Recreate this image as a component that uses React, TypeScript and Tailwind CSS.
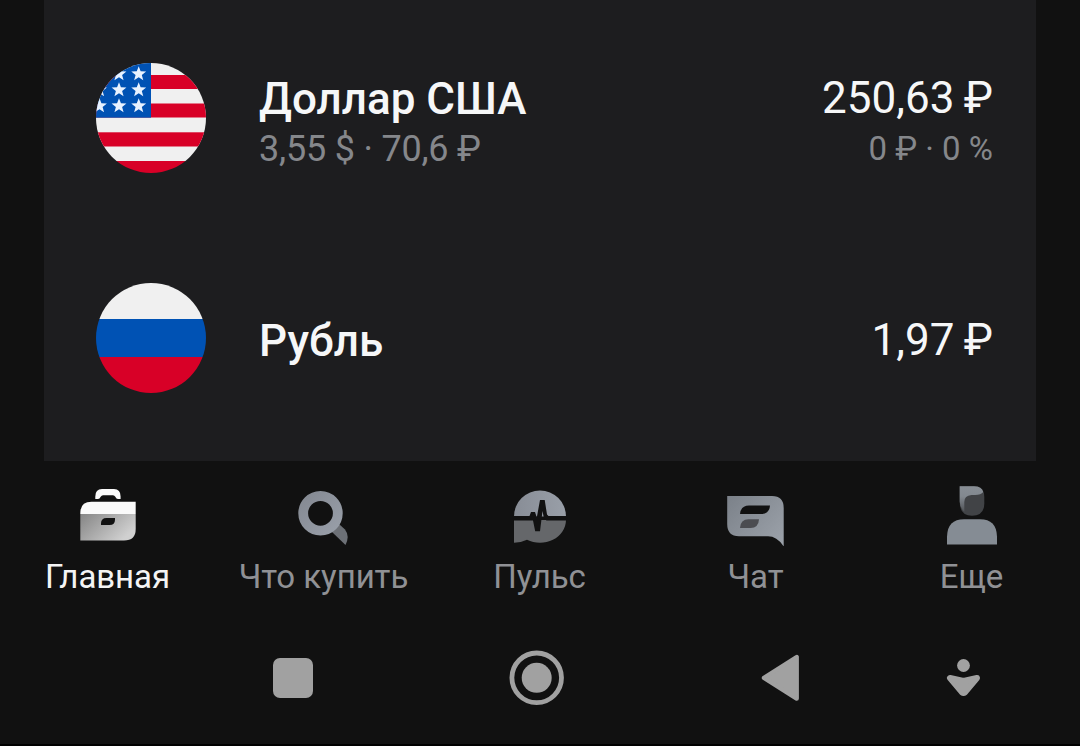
import type { ReactNode } from "react";

const STAR_XS = [99.5, 119, 138.7];
const STAR_YS = [74, 90, 106];

function starPoints(cx: number, cy: number, r: number) {
  return Array.from({ length: 10 }, (_, i) => {
    const a = -Math.PI / 2 + (i * Math.PI) / 5;
    const d = i % 2 ? r * 0.42 : r;
    return `${(cx + d * Math.cos(a)).toFixed(2)},${(cy + d * Math.sin(a)).toFixed(2)}`;
  }).join(" ");
}

function UsaFlag() {
  return (
    <svg className="size-[110px] shrink-0" viewBox="96 63 110 110">
      <clipPath id="usa"><circle cx="151" cy="118" r="55" /></clipPath>
      <g clipPath="url(#usa)">
        <rect x="96" y="63" width="110" height="98" fill="#f0f0f0" />
        <rect x="96" y="75" width="110" height="14" fill="#d80027" />
        <rect x="96" y="103.5" width="110" height="14" fill="#d80027" />
        <rect x="96" y="132.3" width="110" height="14.2" fill="#d80027" />
        <rect x="96" y="161" width="110" height="14" fill="#d80027" />
        <rect x="96" y="63" width="55" height="54.7" fill="#0052b4" />
        {STAR_YS.flatMap((y) =>
          STAR_XS.map((x) => <polygon key={`${x}-${y}`} points={starPoints(x, y, 7.8)} fill="#e8f2ff" />),
        )}
      </g>
    </svg>
  );
}

function RussiaFlag() {
  return (
    <svg className="size-[110px] shrink-0" viewBox="96 282.5 110 110">
      <clipPath id="rus"><circle cx="151" cy="337.5" r="55" /></clipPath>
      <g clipPath="url(#rus)">
        <rect x="96" y="282" width="110" height="36.5" fill="#f0f0f0" />
        <rect x="96" y="318.5" width="110" height="38" fill="#0052b4" />
        <rect x="96" y="356.5" width="110" height="37" fill="#d80027" />
      </g>
    </svg>
  );
}

function HomeIcon() {
  return (
    <svg className="size-16" viewBox="76 482 64 64">
      <defs>
        <linearGradient id="caseBody" x1="0" y1="0" x2="1" y2="0.5">
          <stop offset="0" stopColor="#858585" />
          <stop offset="1" stopColor="#d0d0d0" />
        </linearGradient>
      </defs>
      <path d="M95.300 499V496.500Q95.300 489 102 489H114Q120.600 489 120.600 496.500V499H118Q116.300 499 115.300 496.800Q114.500 495.200 113 495.200H103Q101.500 495.200 100.700 496.800Q99.700 499 98 499Z" fill="#fbfbfb" />
      <path d="M80.300 514V513Q80.300 501.700 91.500 501.700H135.700V514Z" fill="#fafafa" />
      <path d="M80.300 514H135.700V529Q135.700 540.500 124 540.500H80.300Z" fill="url(#caseBody)" />
      <path d="M101 525V523.500Q101 518 106.500 518H115V519.500Q115 525 109.500 525Z" fill="#111" />
    </svg>
  );
}

function SearchIcon() {
  return (
    <svg className="size-16" viewBox="292 482 64 64">
      <defs>
        <linearGradient id="ring" x1="0" y1="0" x2="1" y2="1">
          <stop offset="0" stopColor="#858a93" />
          <stop offset="1" stopColor="#989ea8" />
        </linearGradient>
      </defs>
      <path d="M332 532L345.500 545Q350 536 345 529.500L339 524Z" fill="#6d7177" />
      <circle cx="320.500" cy="513.300" r="17.300" fill="none" stroke="url(#ring)" strokeWidth="9.800" />
    </svg>
  );
}

function PulseIcon() {
  return (
    <svg className="size-16" viewBox="508 482 64 64">
      <defs>
        <linearGradient id="dome" x1="0" y1="0" x2="1" y2="0">
          <stop offset="0" stopColor="#888d96" />
          <stop offset="1" stopColor="#999fa8" />
        </linearGradient>
      </defs>
      <path d="M514 516.500A26 26 0 0 1 566 516.500Z" fill="url(#dome)" />
      <path d="M514 520H566A26 23 0 0 1 527 539.700Q521 542.700 514 542.700Z" fill="#65676a" />
      <path d="M513 516H529.500L531 512H535L536.800 517.500L540 500H544.700L547 514.500L548.500 516H567V520.400H546.500L544 518.500L542.500 511L540 531.300H535.200L533 520.400H513Z" fill="#111" />
    </svg>
  );
}

function ChatIcon() {
  return (
    <svg className="size-16" viewBox="724 482 64 64">
      <defs>
        <linearGradient id="bubble" x1="0" y1="0" x2="1" y2="0.8">
          <stop offset="0" stopColor="#7b8189" />
          <stop offset="1" stopColor="#9aa0a8" />
        </linearGradient>
      </defs>
      <path d="M727.200 496H772Q783.700 496 783.700 508V546.500Q777 536.300 768 536.300H739Q727.200 536.300 727.200 524Z" fill="url(#bubble)" />
      <path d="M740 514Q740.800 505.500 749 505.500H770Q769.500 514 761 514Z" fill="#111" />
      <path d="M740 528Q740.500 519.300 748.500 519.300H759Q758.500 528 750.500 528Z" fill="#4b4c51" />
    </svg>
  );
}

function MoreIcon() {
  return (
    <svg className="size-16" viewBox="940 482 64 64">
      <defs>
        <linearGradient id="hair" x1="0" y1="0" x2="0" y2="1">
          <stop offset="0" stopColor="#888e95" />
          <stop offset="0.4" stopColor="#82888f" />
          <stop offset="1" stopColor="#505357" />
        </linearGradient>
      </defs>
      <path d="M959.700 486.300H974Q984.300 487 984.300 497V503.500Q984.300 515.700 972 515.700Q959.700 515.700 959.700 502Z" fill="#414346" />
      <path d="M959.700 486.300H974Q982 486.300 983.300 492Q981 495 975 495H971.500Q964.300 495.500 964.300 502V511.700Q959.700 507.500 959.700 501.500Z" fill="url(#hair)" />
      <path d="M947 544.500V536.500Q947.500 519.300 964 519.300H980Q996.500 519.300 997 536.500V544.500Z" fill="#858c94" />
    </svg>
  );
}

function Tab({ icon, label, active }: { icon: ReactNode; label: string; active?: boolean }) {
  return (
    <button className={active ? "flex flex-col items-center pt-[21px] text-[#f4f4f4]" : "flex flex-col items-center pt-[21px] text-[#909195]"}>
      {icon}
      <span className="mt-[11px] mr-px text-[33px] leading-[40px] tracking-[-0.05px] whitespace-nowrap">{label}</span>
    </button>
  );
}

export default function App() {
  return (
    <div className="flex h-[746px] w-[1080px] flex-col overflow-hidden border-b-2 border-black bg-[#111111] font-['Roboto',sans-serif]">
      <main className="mx-11 h-[461px] shrink-0 bg-[#1d1d1f] pr-[43px] pl-[52px] text-[#f6f7f8]">
        <div className="flex h-[172px] items-start pt-[63px]">
          <UsaFlag />
          <div className="ml-[53px] flex flex-col pt-[10px]">
            <span className="text-[44px] leading-[52px] font-medium">Доллар США</span>
            <span className="mt-[2px] text-[36px] leading-[44px] tracking-[-0.2px] text-[#85878b]">3,55 $ · 70,6 ₽</span>
          </div>
          <div className="ml-auto flex flex-col items-end pt-[9px]">
            <span className="text-[44px] leading-[52px] [word-spacing:-1.5px]">250,63 ₽</span>
            <span className="mt-[3px] text-[33px] leading-[44px] text-[#85878b]">0 ₽ · 0 %</span>
          </div>
        </div>
        <div className="mt-[110px] flex h-[111px] items-center">
          <RussiaFlag />
          <span className="ml-[53px] pt-[6px] text-[44px] leading-[52px] font-medium">Рубль</span>
          <span className="ml-auto pt-[4px] text-[44px] leading-[52px] [word-spacing:-1.5px]">1,97 ₽</span>
        </div>
      </main>
      <nav className="grid h-[177px] shrink-0 grid-cols-5">
        <Tab icon={<HomeIcon />} label="Главная" active />
        <Tab icon={<SearchIcon />} label="Что купить" />
        <Tab icon={<PulseIcon />} label="Пульс" />
        <Tab icon={<ChatIcon />} label="Чат" />
        <Tab icon={<MoreIcon />} label="Еще" />
      </nav>
      <div className="flex h-20 shrink-0 items-center">
        <div className="ml-[273px] size-10 rounded-[7px] bg-[#a1a1a1]" />
        <svg className="ml-[196px] size-14" viewBox="509 650 56 56">
          <circle cx="536.700" cy="677.800" r="24.800" fill="none" stroke="#a1a1a1" strokeWidth="4.800" />
          <circle cx="536.700" cy="677.800" r="15" fill="#a1a1a1" />
        </svg>
        <svg className="ml-[195px] h-12 w-10" viewBox="760 654 40 48">
          <path d="M764 677.800L796.700 657V698.600Z" fill="#a1a1a1" stroke="#a1a1a1" strokeWidth="4.400" strokeLinejoin="round" />
        </svg>
        <svg className="ml-[144px] size-10" viewBox="944 658 40 40">
          <circle cx="963.500" cy="665.500" r="6.400" fill="#a1a1a1" />
          <path d="M950 678L963.500 681L977 678L965 692.300Q963.500 693.500 962 692.300Z" fill="#a1a1a1" stroke="#a1a1a1" strokeWidth="6" strokeLinejoin="round" />
        </svg>
      </div>
    </div>
  );
}
